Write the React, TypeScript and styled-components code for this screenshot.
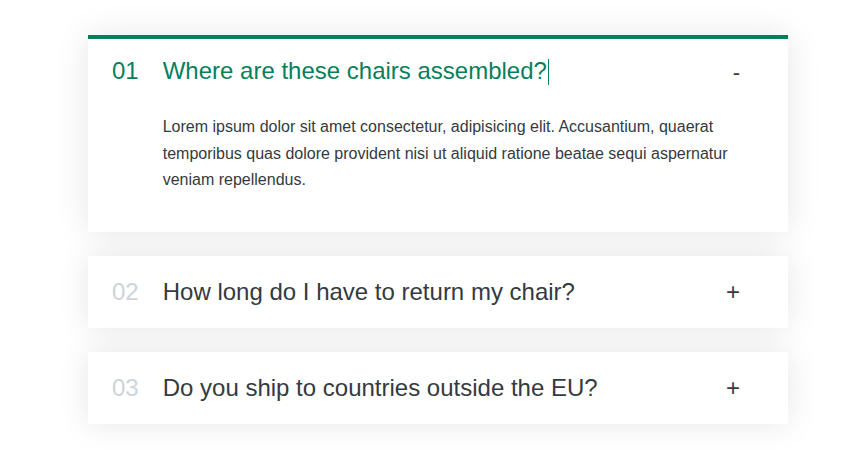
import React, { useState } from "react";
import styled, { createGlobalStyle } from "styled-components";

const GlobalStyle = createGlobalStyle`
  * { box-sizing: border-box; margin: 0; padding: 0; }
  body {
    margin: 0;
    background: #ffffff;
    font-family: "Liberation Sans", Arial, sans-serif;
    color: #343a40;
  }
`;

const green = "#087f5b";

const Page = styled.div`
  padding: 35px 0 29px 88px;
`;

const Accordion = styled.div`
  width: 700px;
  display: flex;
  flex-direction: column;
  gap: 24px;
`;

const Item = styled.div<{ $open: boolean }>`
  background: #fff;
  box-shadow: 0 0 32px rgba(0, 0, 0, 0.1);
  padding: 18px 48px 18px 24px;
  border-top: 4px solid ${(p) => (p.$open ? green : "#fff")};
  border-bottom: 4px solid #fff;
  cursor: pointer;
  display: grid;
  grid-template-columns: auto 1fr auto;
  column-gap: 24px;
  row-gap: 29px;
  align-items: center;
`;

const Number = styled.p<{ $open: boolean }>`
  font-size: 24px;
  font-weight: 400;
  color: ${(p) => (p.$open ? green : "#ced4da")};
`;

const Title = styled.p<{ $open: boolean }>`
  font-size: 24px;
  font-weight: 400;
  color: ${(p) => (p.$open ? green : "#343a40")};
`;

const Caret = styled.span`
  display: inline-block;
  width: 1px;
  height: 26px;
  background: ${green};
  vertical-align: -6px;
  margin-left: 1px;
`;

const Icon = styled.p<{ $open: boolean }>`
  font-size: ${(p) => (p.$open ? "22px" : "24px")};
  line-height: 24px;
  font-weight: 400;
  color: #343a40;
  padding-top: ${(p) => (p.$open ? "3px" : "0")};
`;

const HiddenBox = styled.div`
  grid-column: 2 / -1;
  padding-bottom: 16px;
`;

const Body = styled.p`
  font-size: 16px;
  line-height: 26.5px;
  color: #343a40;
`;

const faqs = [
  {
    title: "Where are these chairs assembled?",
    text: "Lorem ipsum dolor sit amet consectetur, adipisicing elit. Accusantium, quaerat temporibus quas dolore provident nisi ut aliquid ratione beatae sequi aspernatur veniam repellendus.",
  },
  {
    title: "How long do I have to return my chair?",
    text: "Pariatur recusandae dignissimos fuga voluptas unde optio nesciunt commodi beatae, explicabo natus.",
  },
  {
    title: "Do you ship to countries outside the EU?",
    text: "Excepturi velit laborum, perspiciatis nemo perferendis reiciendis aliquam possimus dolor sed! Dolore laborum ducimus veritatis facere molestias!",
  },
];

export default function App() {
  const [open, setOpen] = useState<number | null>(0);
  return (
    <Page>
      <GlobalStyle />
      <Accordion>
        {faqs.map((f, i) => {
          const isOpen = open === i;
          return (
            <Item key={f.title} $open={isOpen} onClick={() => setOpen(isOpen ? null : i)}>
              <Number $open={isOpen}>{String(i + 1).padStart(2, "0")}</Number>
              <Title $open={isOpen}>
                {f.title}
                {isOpen && <Caret />}
              </Title>
              <Icon $open={isOpen}>{isOpen ? "-" : "+"}</Icon>
              {isOpen && (
                <HiddenBox>
                  <Body>{f.text}</Body>
                </HiddenBox>
              )}
            </Item>
          );
        })}
      </Accordion>
    </Page>
  );
}
